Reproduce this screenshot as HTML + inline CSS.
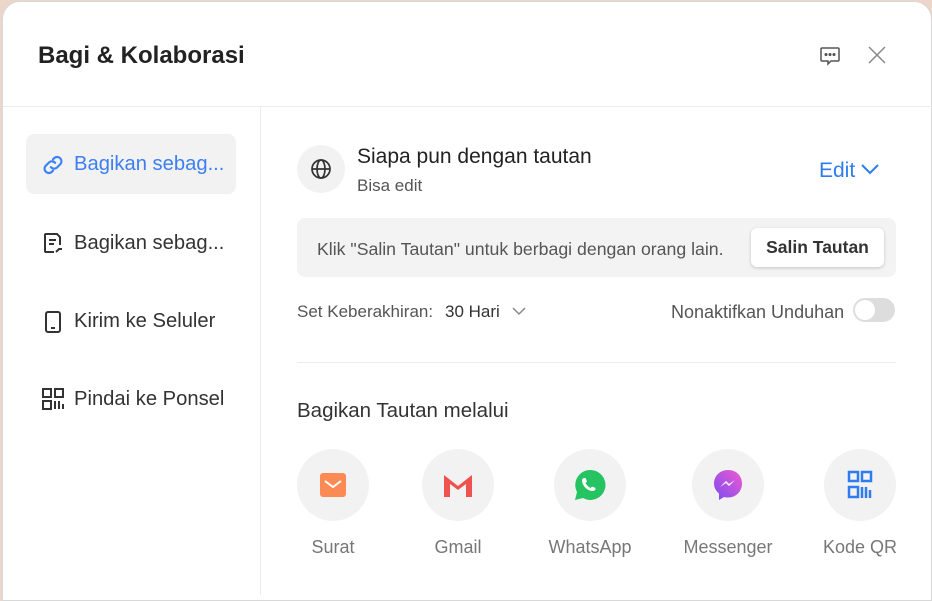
<!DOCTYPE html>
<html><head><meta charset="utf-8"><style>
*{margin:0;padding:0;box-sizing:border-box}
body{width:932px;height:595px;background:#ecd6c9;font-family:"Liberation Sans",sans-serif;overflow:hidden;position:relative}
.dlg{position:absolute;left:2px;top:1px;width:930px;height:600px;background:#fff;border-radius:18px 18px 0 0;border:1px solid #d8d8d8}
.a{position:absolute;white-space:nowrap}
.t{color:#333}
.circ{position:absolute;width:72px;height:72px;border-radius:50%;background:#f2f2f2;display:flex;align-items:center;justify-content:center}
.lbl{position:absolute;font-size:18px;color:#777;width:120px;text-align:center}
</style></head><body>
<div class="dlg"></div>
<div class="a" style="left:38px;top:42px;font-size:24px;font-weight:bold;color:#222">Bagi &amp; Kolaborasi</div>
<svg class="a" style="left:818px;top:44px" width="24" height="24" viewBox="0 0 24 24" fill="none" stroke="#555" stroke-width="1.5"><path d="M4 4h16a1 1 0 0 1 1 1v11a1 1 0 0 1-1 1h-7l-3 3v-3H4a1 1 0 0 1-1-1V5a1 1 0 0 1 1-1z"/><circle cx="8" cy="10.5" r=".8" fill="#555"/><circle cx="12" cy="10.5" r=".8" fill="#555"/><circle cx="16" cy="10.5" r=".8" fill="#555"/></svg>
<svg class="a" style="left:868px;top:46px" width="18" height="18" viewBox="0 0 18 18" stroke="#888" stroke-width="1.5"><path d="M1 1l16 16M17 1L1 17"/></svg>
<div class="a" style="left:3px;top:106px;width:929px;height:1px;background:#ececec"></div>
<div class="a" style="left:260px;top:107px;width:1px;height:488px;background:#ececec"></div>
<div class="a" style="left:26px;top:134px;width:210px;height:60px;background:#f2f2f2;border-radius:8px"></div>
<svg class="a" style="left:40px;top:152px" width="26" height="26" viewBox="0 0 24 24" fill="none" stroke="#3b82f6" stroke-width="2" stroke-linecap="round"><path d="M10 14a4 4 0 0 0 5.5.5l3.5-3.5a4 4 0 0 0-5.6-5.6l-1.4 1.4"/><path d="M14 10a4 4 0 0 0-5.5-.5l-3.5 3.5a4 4 0 0 0 5.6 5.6l1.4-1.4"/></svg>
<div class="a" style="left:74px;top:153px;font-size:20.2px;color:#3b7ff0">Bagikan sebag...</div>
<svg class="a" style="left:42px;top:231px" width="22" height="24" viewBox="0 0 22 24" fill="none" stroke="#333" stroke-width="2"><path d="M12 21H4a1 1 0 0 1-1-1V4a1 1 0 0 1 1-1h11l3 3v8"/><path d="M7 9h7M7 13h5"/><path d="M14 21l3-3h3" stroke-width="2"/></svg>
<div class="a t" style="left:74px;top:232px;font-size:20.2px">Bagikan sebag...</div>
<svg class="a" style="left:43px;top:310px" width="20" height="24" viewBox="0 0 20 24" fill="none" stroke="#333" stroke-width="2"><rect x="3" y="2" width="14" height="20" rx="2"/><path d="M8 18h4"/></svg>
<div class="a t" style="left:74px;top:310px;font-size:20.2px">Kirim ke Seluler</div>
<svg class="a" style="left:42px;top:388px" width="22" height="22" viewBox="0 0 22 22" fill="none" stroke="#333" stroke-width="2"><rect x="1" y="1" width="8" height="8"/><rect x="13" y="1" width="8" height="8"/><rect x="1" y="13" width="8" height="8"/><path d="M13 13v8M17 13v8M21 16v5"/></svg>
<div class="a t" style="left:74px;top:388px;font-size:20.2px">Pindai ke Ponsel</div>

<div class="circ" style="left:297px;top:145px;width:48px;height:48px"><svg width="24" height="24" viewBox="0 0 24 24" fill="none" stroke="#333" stroke-width="1.7"><circle cx="12" cy="12" r="9"/><ellipse cx="12" cy="12" rx="4" ry="9"/><path d="M3 12h18"/></svg></div>
<div class="a" style="left:357px;top:145px;font-size:21px;color:#222">Siapa pun dengan tautan</div>
<div class="a" style="left:357px;top:176px;font-size:17px;color:#555">Bisa edit</div>
<div class="a" style="left:819px;top:159px;font-size:21px;color:#2f7cf0">Edit</div>
<svg class="a" style="left:860px;top:162px" width="20" height="14" viewBox="0 0 20 14" fill="none" stroke="#2f7cf0" stroke-width="2"><path d="M2 3l8 8 8-8"/></svg>
<div class="a" style="left:297px;top:218px;width:599px;height:59px;background:#f3f3f3;border-radius:8px"></div>
<div class="a" style="left:317px;top:239px;font-size:17.7px;color:#555">Klik "Salin Tautan" untuk berbagi dengan orang lain.</div>
<div class="a" style="left:751px;top:228px;width:133px;height:39px;background:#fff;border-radius:6px;box-shadow:0 1px 3px rgba(0,0,0,.2);font-size:17.5px;font-weight:bold;color:#333;text-align:center;line-height:39px">Salin Tautan</div>
<div class="a" style="left:297px;top:302px;font-size:17px;color:#555">Set Keberakhiran:</div>
<div class="a" style="left:445px;top:302px;font-size:17px;color:#333">30 Hari</div>
<svg class="a" style="left:512px;top:306px" width="14" height="10" viewBox="0 0 14 10" fill="none" stroke="#888" stroke-width="1.5"><path d="M1 2l6 6 6-6"/></svg>
<div class="a" style="left:671px;top:302px;font-size:18px;color:#555">Nonaktifkan Unduhan</div>
<div class="a" style="left:853px;top:298px;width:42px;height:24px;border-radius:12px;background:#ddd"><div style="position:absolute;left:2px;top:2px;width:20px;height:20px;border-radius:50%;background:#fff"></div></div>
<div class="a" style="left:297px;top:362px;width:599px;height:1px;background:#ececec"></div>
<div class="a" style="left:297px;top:399px;font-size:20.5px;color:#333">Bagikan Tautan melalui</div>

<div class="circ" style="left:297px;top:449px"><svg width="26" height="24" viewBox="0 0 26 24"><rect x="0" y="0" width="26" height="24" rx="3" fill="#fb8a55"/><path d="M5 8l8 6 8-6" stroke="#fff" stroke-width="2" fill="none"/></svg></div>
<div class="circ" style="left:422px;top:449px"><svg width="28" height="24" viewBox="0 0 28 24"><path d="M0 2l14 11L28 2v22h-6V11l-8 6-8-6v13H0z" fill="#ef5350"/></svg></div>
<div class="circ" style="left:554px;top:449px"><svg width="32" height="32" viewBox="0 0 32 32"><path d="M16 1a15 15 0 0 0-13 22L1 31l8-2A15 15 0 1 0 16 1z" fill="#25c361"/><path d="M11 9c1 0 1.5 2.5 2 3.5l-1.5 1.5c1 2 3 4 5 5l1.5-1.5c1 .5 3.5 1 3.5 2 0 1.5-1.5 2.5-3 2.5-5 0-10.5-5.5-10.5-10.5 0-1.5 1-2.5 3-2.5z" fill="#fff"/></svg></div>
<div class="circ" style="left:692px;top:449px"><svg width="30" height="32" viewBox="0 0 30 32"><defs><linearGradient id="m" x1="0" y1="1" x2="1" y2="0"><stop offset="0" stop-color="#7b4cf2"/><stop offset="1" stop-color="#f05ad0"/></linearGradient></defs><path d="M15 1C7 1 1 7 1 14.5c0 4 2 7.5 5 10V31l5-3c1.3.4 2.6.5 4 .5 8 0 14-6 14-14S23 1 15 1z" fill="url(#m)"/><path d="M7 18l6-6 3 3 6-4-6 6-3-3z" fill="#fff"/></svg></div>
<div class="circ" style="left:824px;top:449px"><svg width="26" height="30" viewBox="0 0 26 30" fill="none" stroke="#2f7cf0" stroke-width="2.5"><rect x="2" y="2" width="9" height="9"/><rect x="15" y="2" width="9" height="9"/><rect x="2" y="17" width="9" height="10"/><path d="M15 17v11M19 17v11M23 20v8"/></svg></div>
<div class="lbl" style="left:273px;top:537px">Surat</div>
<div class="lbl" style="left:398px;top:537px">Gmail</div>
<div class="lbl" style="left:530px;top:537px">WhatsApp</div>
<div class="lbl" style="left:668px;top:537px">Messenger</div>
<div class="lbl" style="left:800px;top:537px">Kode QR</div>
</body></html>
